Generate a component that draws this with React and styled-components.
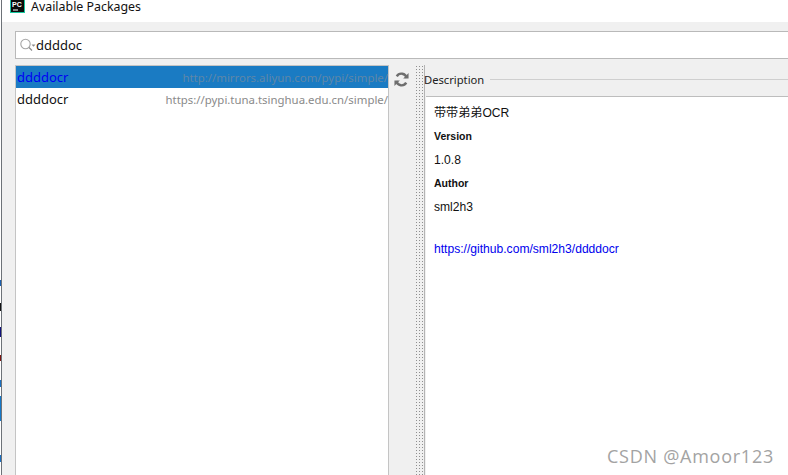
import React from "react";
import styled, { createGlobalStyle } from "styled-components";

const Global = createGlobalStyle`
  html, body { margin: 0; padding: 0; background: #fff; overflow: hidden; }
  * { box-sizing: border-box; }
`;
const Frame = styled.div`
  position: relative; display: flex; width: 788px; height: 475px; overflow: hidden;
  font-family: "Liberation Sans", Arial, sans-serif;
`;
const Backdrop = styled.div`
  width: 1px; flex: none; background: #fff; position: relative;
`;
const Fleck = styled.i`
  position: absolute; left: 0; width: 1px; display: block;
  top: ${p => p.$y}px; height: ${p => p.$h}px; background: ${p => p.$c};
`;
const Edge = styled.div`width: 1px; flex: none; background: #6d7278;`;
const Window = styled.div`flex: 1; display: flex; flex-direction: column; min-width: 0;`;
const TitleBar = styled.div`
  height: 22px; flex: none; background: #fff; display: flex; align-items: flex-start;
  padding-left: 8px; gap: 6px; font-size: 12.4px; line-height: 13px; color: #111;
  font-family: "Noto Sans", sans-serif;
`;
const Body = styled.div`
  flex: 1; min-height: 0; background: #f0f0f0; display: flex; flex-direction: column;
  padding: 9px 0 0 13px;
`;
const Search = styled.div`
  height: 28px; flex: none; background: #fff; border: 1px solid #b9b9b9; border-right: 0;
  display: flex; align-items: center; padding-left: 3px;
  font: 13px "Noto Sans", sans-serif; color: #111;
`;
const Panes = styled.div`flex: 1; min-height: 0; display: flex; margin-top: 6px;`;
const List = styled.div`
  width: 374px; flex: none; background: #fff; border: 1px solid #c4c4c4; border-bottom: 0;
  display: flex; flex-direction: column;
`;
const Row = styled.div`
  height: 22px; display: flex; align-items: center; justify-content: space-between;
  padding: 0 0 0 1px; font-family: "Noto Sans", sans-serif; font-size: 13px;
  background: ${p => (p.$selected ? "#1a7bc3" : "#fff")};
  color: ${p => (p.$selected ? "#0000f5" : "#111")};
`;
const Repo = styled.span`
  font-size: 11.4px; white-space: nowrap;
  color: ${p => (p.$selected ? "#5f87a8" : "#8a8a8a")};
`;
const Tools = styled.div`
  width: 26px; flex: none; display: flex; justify-content: center; padding: 7px 1px 0 0;
`;
const Splitter = styled.div`
  width: 9px; flex: none; border-right: 1px solid #b4b4b4;
  background-color: #f0f0f0;
  background-image: radial-gradient(#8f8f8f 0.7px, transparent 0.8px);
  background-size: 3px 3px; background-position: 2px 0; margin-left: 1px;
`;
const Details = styled.div`flex: 1; min-width: 0; display: flex; flex-direction: column; margin-left: 1px;`;
const Legend = styled.div`
  height: 31px; flex: none; display: flex; align-items: center; gap: 6px;
  padding-bottom: 2px;
  font: 11.2px "Noto Sans", sans-serif; color: #222; margin-left: -2px;
  &::after { content: ""; flex: 1; height: 1px; background: #cfcfcf; }
`;
const Sheet = styled.div`
  flex: 1; background: #fff; border-top: 1px solid #bdbdbd; padding: 9px 0 0 8px;
  font-size: 12.1px; color: #111; font-family: "Liberation Sans", "Noto Sans CJK SC", sans-serif;
`;
const Line = styled.div`height: 15px; line-height: 15px; margin-bottom: ${p => p.$gap ?? 9}px;`;
const Label = styled.div`
  height: 13px; line-height: 13px; font-weight: 700; font-size: 10.5px;
  margin-bottom: 10px; font-family: "Liberation Sans", sans-serif;
`;
const Link = styled.a`color: #0000ee; text-decoration: none;`;
const Watermark = styled.div`
  position: absolute; right: 14px; bottom: 7px; font: 18px "Open Sans", sans-serif;
  color: #a3a3a3; letter-spacing: 0.75px;
`;

const Logo = () => (
  <svg width="15" height="13" viewBox="0 0 15 13">
    <rect width="15" height="13" fill="#19c8a0" />
    <rect x="1" width="13" height="12" fill="#0b0b0b" />
    <text x="2" y="6.5" fontSize="7" fontWeight="700" fill="#fff" fontFamily="Liberation Sans">PC</text>
    <rect x="3" y="9.5" width="5" height="1" fill="#fff" />
  </svg>
);
const SearchIcon = () => (
  <svg width="17" height="17" viewBox="0 0 17 17" fill="none">
    <circle cx="6.5" cy="7" r="4.7" stroke="#a5a5a5" strokeWidth="1.1" />
    <path d="M10 10.5l3 3" stroke="#8d8d8d" strokeWidth="1.3" />
    <path d="M12.5 7.5h4l-2 2.2z" fill="#8d8d8d" />
  </svg>
);
const Refresh = () => (
  <svg width="15" height="15" viewBox="0 0 14 14" fill="none" stroke="#6e6e6e" strokeWidth="2.3">
    <path d="M11.8 5.5A5 5 0 0 0 2.6 4" />
    <path d="M2.2 8.5a5 5 0 0 0 9.2 1.5" />
    <path d="M8.6 6h5V1z" fill="#6e6e6e" stroke="none" />
    <path d="M5.4 8H.4v5z" fill="#6e6e6e" stroke="none" />
  </svg>
);

const flecks = [
  [280, 6, "#1b5fae"], [303, 8, "#111"], [327, 10, "#12127a"], [355, 6, "#7a1510"],
  [380, 7, "#1a6fc0"], [396, 25, "#1578c8"], [455, 7, "#1a6fc0"],
];

export default function App() {
  return (
    <Frame>
      <Global />
      <Backdrop>
        {flecks.map(([y, h, c]) => <Fleck key={y} $y={y} $h={h} $c={c} />)}
      </Backdrop>
      <Edge />
      <Window>
        <TitleBar><Logo />Available Packages</TitleBar>
        <Body>
          <Search><SearchIcon />ddddoc</Search>
          <Panes>
            <List>
              <Row $selected>ddddocr<Repo $selected>http://mirrors.aliyun.com/pypi/simple/</Repo></Row>
              <Row>ddddocr<Repo>https://pypi.tuna.tsinghua.edu.cn/simple/</Repo></Row>
            </List>
            <Tools><Refresh /></Tools>
            <Splitter />
            <Details>
              <Legend>Description</Legend>
              <Sheet>
                <Line>带带弟弟OCR</Line>
                <Label>Version</Label>
                <Line>1.0.8</Line>
                <Label>Author</Label>
                <Line $gap={27}>sml2h3</Line>
                <Line><Link href="#">https://github.com/sml2h3/ddddocr</Link></Line>
              </Sheet>
            </Details>
          </Panes>
        </Body>
      </Window>
      <Watermark>CSDN @Amoor123</Watermark>
    </Frame>
  );
}
